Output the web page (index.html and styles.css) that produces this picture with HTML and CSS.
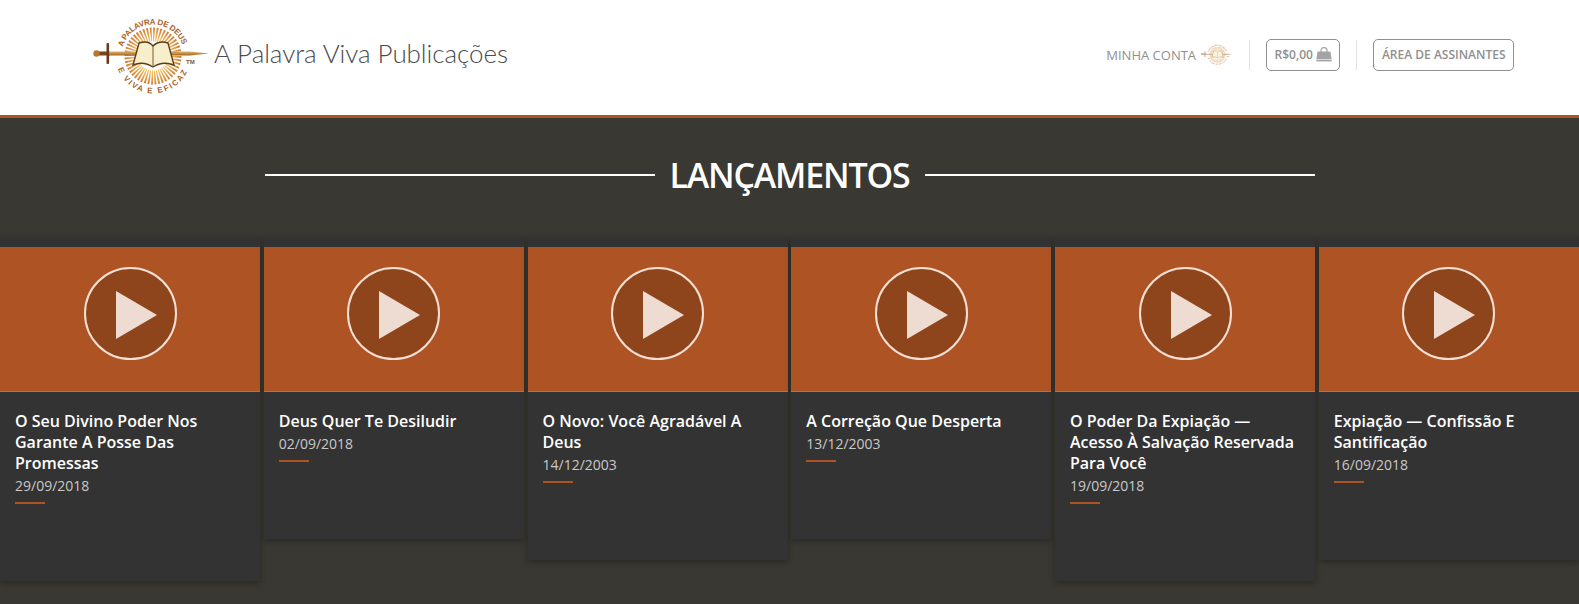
FILE: index.html
```html
<!DOCTYPE html>
<html lang="pt-BR">
<head>
    <meta charset="UTF-8">
    <meta name="viewport" content="width=device-width, initial-scale=1.0">
    <title>A Palavra Viva Publicações</title>
    <link rel="stylesheet" href="styles.css">
</head>
<body>
    <svg class="defs" width="0" height="0">
        <defs>
            <path id="arcTop" d="M 32.8 37 A 31.5 31.5 0 0 1 92.5 35"/>
            <path id="arcBottom" d="M 27.8 58.8 A 37.5 37.5 0 0 0 98.2 58.8"/>
            <radialGradient id="rayGrad" gradientUnits="userSpaceOnUse" cx="63" cy="46" r="29">
                <stop offset="0.5" stop-color="#f8c765"/>
                <stop offset="1" stop-color="#cf7a30"/>
            </radialGradient>
            <linearGradient id="bladeGrad" x1="0" y1="0" x2="0" y2="1">
                <stop offset="0" stop-color="#e0b469"/>
                <stop offset="1" stop-color="#a4651f"/>
            </linearGradient>
            <symbol id="logoMark" viewBox="0 0 130 90">
                <circle cx="63" cy="46" r="21.5" fill="none" stroke="url(#rayGrad)" stroke-width="14" stroke-dasharray="1.5 1.3"/>
                <rect x="4" y="41.5" width="16" height="4" fill="#7a4420"/>
                <circle cx="6.5" cy="43.5" r="3.2" fill="#b8772e"/>
                <rect x="16.5" y="33" width="2.6" height="21" rx="1" fill="#6b3a18"/>
                <path d="M19 41.5 L46 41.5 L46 45.5 L19 45.5 Z M80 41.5 L100 41.5 L119 43.4 L100 45.5 L80 45.5 Z" fill="url(#bladeGrad)"/>
                <path d="M49 33 C55 31 60 32 63 36 C67 32 72 31 78 33 L84 55 C76 52 69 53 63 57 C57 53 50 52 43 55 Z" fill="#f7eecb" stroke="#5e3a18" stroke-width="1.4"/>
                <path d="M63 36 L63 57" stroke="#7a5a2c" stroke-width="1"/>
                <text class="logo-ring" textLength="78"><textPath href="#arcTop">A PALAVRA DE DEUS</textPath></text>
                <text class="logo-ring" textLength="88"><textPath href="#arcBottom">E VIVA E EFICAZ</textPath></text>
                <text class="logo-tm" x="96" y="54">TM</text>
            </symbol>
        </defs>
    </svg>

    <header class="topo">
        <a class="marca" href="#">
            <svg class="marca-logo" width="130" height="90"><use href="#logoMark"/></svg>
            <span class="marca-nome">A Palavra Viva Publicações</span>
        </a>
        <nav class="menu">
            <a class="minha-conta" href="#">
                MINHA CONTA
                <svg class="conta-logo" width="36" height="25"><use href="#logoMark"/></svg>
            </a>
            <span class="separador"></span>
            <a class="botao" href="#">
                R$0,00
                <svg class="sacola" width="16" height="15" viewBox="0 0 16 15">
                    <path d="M5 5 V3.5 C5 1.5 6.2 .7 8 .7 C9.8 .7 11 1.5 11 3.5 V5" fill="none" stroke="#a3a3a3" stroke-width="1.2"/>
                    <path d="M1.6 4.5 H14.4 L15.6 12 H.4 Z" fill="#a3a3a3"/>
                    <rect x=".4" y="12.6" width="15.2" height="1.8" fill="#a3a3a3"/>
                </svg>
            </a>
            <span class="separador"></span>
            <a class="botao" href="#">ÁREA DE ASSINANTES</a>
        </nav>
    </header>

    <main>
        <h1 class="titulo"><span>LANÇAMENTOS</span></h1>

        <section class="lista">
            <article class="card">
                <div class="card-play"><span class="play"></span></div>
                <div class="card-info">
                    <h2>O Seu Divino Poder Nos Garante A Posse Das Promessas</h2>
                    <p>29/09/2018</p>
                </div>
            </article>
            <article class="card">
                <div class="card-play"><span class="play"></span></div>
                <div class="card-info">
                    <h2>Deus Quer Te Desiludir</h2>
                    <p>02/09/2018</p>
                </div>
            </article>
            <article class="card">
                <div class="card-play"><span class="play"></span></div>
                <div class="card-info">
                    <h2>O Novo: Você Agradável A Deus</h2>
                    <p>14/12/2003</p>
                </div>
            </article>
            <article class="card">
                <div class="card-play"><span class="play"></span></div>
                <div class="card-info">
                    <h2>A Correção Que Desperta</h2>
                    <p>13/12/2003</p>
                </div>
            </article>
            <article class="card">
                <div class="card-play"><span class="play"></span></div>
                <div class="card-info">
                    <h2>O Poder Da Expiação — Acesso À Salvação Reservada Para Você</h2>
                    <p>19/09/2018</p>
                </div>
            </article>
            <article class="card">
                <div class="card-play"><span class="play"></span></div>
                <div class="card-info">
                    <h2>Expiação — Confissão E Santificação</h2>
                    <p>16/09/2018</p>
                </div>
            </article>
        </section>
    </main>
</body>
</html>
```

FILE: styles.css
```css
html, body {
    margin: 0;
    height: 604px;
    overflow: hidden;
}
body {
    font-family: "Open Sans", sans-serif;
    background-color: #393832;
    color: #fff;
}
a {
    color: inherit;
    text-decoration: none;
}
.defs {
    display: block;
    height: 0;
}

/* Topo */
.topo {
    display: flex;
    align-items: center;
    justify-content: space-between;
    box-sizing: border-box;
    height: 118px;
    padding: 0 65px 6px 90px;
    background: #fff;
    border-bottom: 3px solid #ae5424;
}
.marca {
    display: flex;
    align-items: center;
}
.marca-logo {
    display: block;
}
.marca-nome {
    margin: 0 0 3px -6px;
    font-family: "Lato", sans-serif;
    font-weight: 300;
    font-size: 26px;
    letter-spacing: -.06px;
    color: #4b4b4b;
}
.logo-ring {
    font-family: "Liberation Sans", sans-serif;
    font-weight: bold;
    font-size: 8px;
    fill: #a9622a;
}
.logo-tm {
    font-family: "Liberation Sans", sans-serif;
    font-weight: bold;
    font-size: 6px;
    fill: #7a5a3a;
}
.menu {
    display: flex;
    align-items: center;
    color: #8f8f8f;
}
.minha-conta {
    display: flex;
    align-items: center;
    font-size: 13px;
}
.conta-logo {
    margin: 0 -3px 0 4px;
    opacity: .6;
}
.separador {
    width: 1px;
    height: 30px;
    margin: 0 16px;
    background: #e2e2e2;
}
.botao {
    display: flex;
    align-items: center;
    gap: 3px;
    height: 32px;
    box-sizing: border-box;
    padding: 0 7.5px;
    border: 1px solid #8f8f8f;
    border-radius: 5px;
    font-size: 12px;
    font-weight: 600;
}

/* Lancamentos */
.titulo {
    display: flex;
    align-items: center;
    justify-content: center;
    gap: 15px;
    width: 1050px;
    margin: 33px auto 0;
    font-size: 34px;
    font-weight: 600;
    line-height: 48px;
    letter-spacing: -1.2px;
}
.titulo::before,
.titulo::after {
    content: "";
    flex: 1;
    height: 2px;
    background: #fff;
}
.lista {
    display: flex;
    align-items: flex-start;
    gap: 3.75px;
    margin-top: 38px;
}
.card {
    flex: 0 0 260px;
    padding-top: 10px;
    background: #333;
    box-shadow: 0 2px 6px rgba(0, 0, 0, .3);
}
.card-play {
    display: flex;
    align-items: center;
    justify-content: center;
    box-sizing: border-box;
    height: 145px;
    padding-bottom: 11px;
    background: #ae5424;
    border-bottom: 1px solid #c4713f;
}
.play {
    position: relative;
    box-sizing: border-box;
    width: 93px;
    height: 93px;
    border: 2px solid #f3dfd3;
    border-radius: 50%;
    background: #8f451c;
}
.play::after {
    content: "";
    position: absolute;
    left: 30px;
    top: 22px;
    border-style: solid;
    border-width: 24px 0 24px 41px;
    border-color: transparent transparent transparent #eedcd3;
}
.card-info {
    padding: 19px 15px 77px;
}
.card-info h2 {
    margin: 0 0 1px;
    font-size: 16px;
    font-weight: 600;
    line-height: 21px;
}
.card-info p {
    margin: 0;
    font-size: 14px;
    line-height: 21px;
    color: #c9c9c9;
}
.card-info p::after {
    content: "";
    display: block;
    width: 30px;
    height: 2px;
    margin-top: 6px;
    background: #ae5424;
}
```
